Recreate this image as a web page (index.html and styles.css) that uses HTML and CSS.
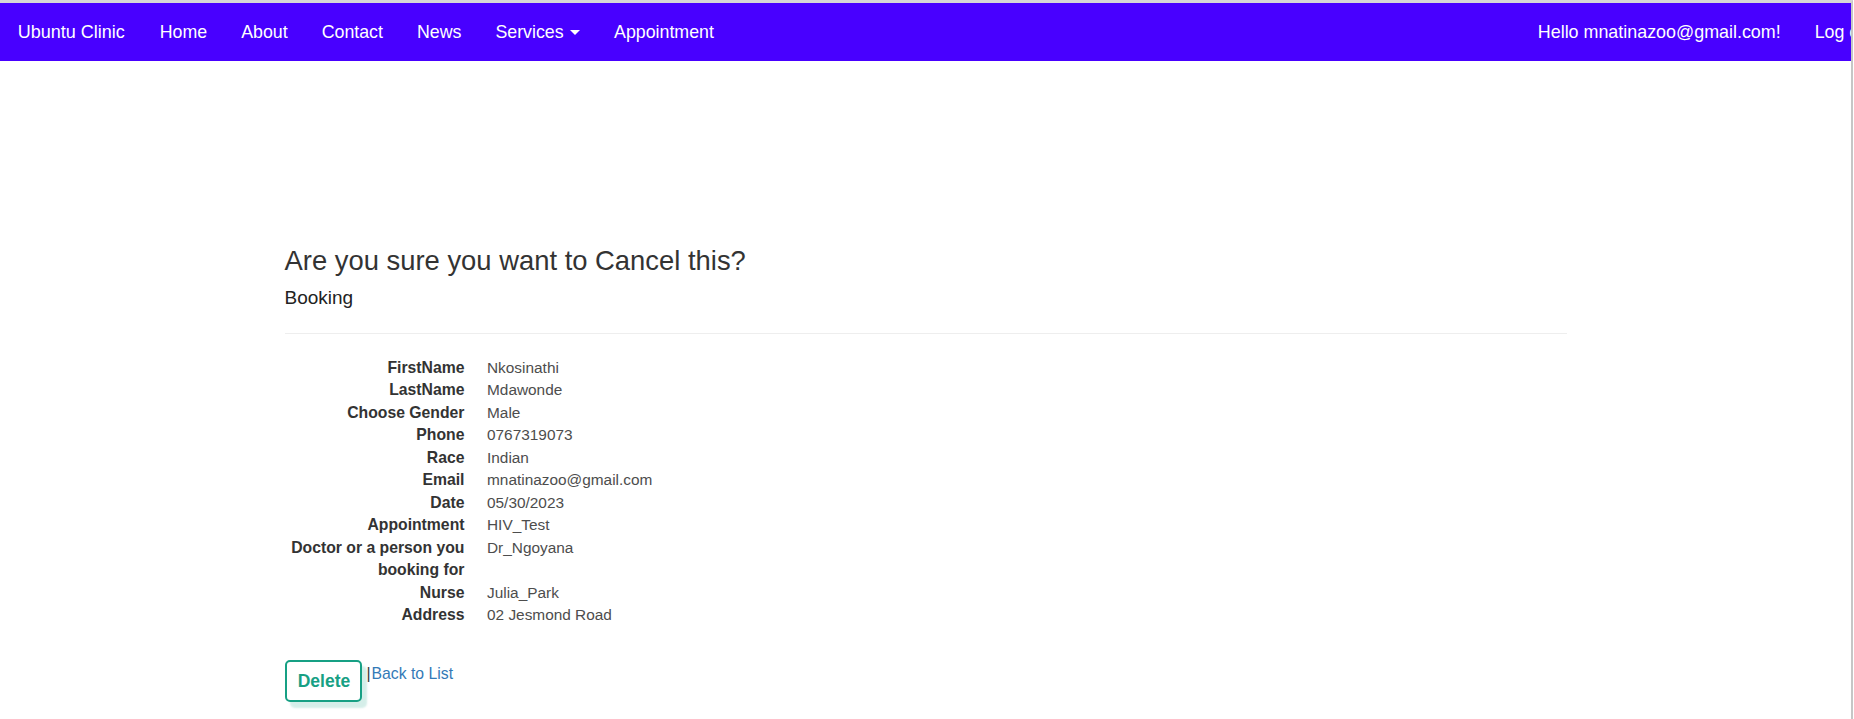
FILE: index.html
```html
<!DOCTYPE html>
<html lang="en">
<head>
<meta charset="utf-8">
<title>Delete - Ubuntu Clinic</title>
<link rel="stylesheet" href="styles.css">
</head>
<body>
<div class="frame">
  <nav class="navbar">
    <div class="navbar-inner">
      <a class="brand" href="#">Ubuntu Clinic</a>
      <ul class="nav">
        <li><a href="#">Home</a></li>
        <li><a href="#">About</a></li>
        <li><a href="#">Contact</a></li>
        <li><a href="#">News</a></li>
        <li><a href="#">Services <span class="caret"></span></a></li>
        <li><a href="#">Appointment</a></li>
      </ul>
      <ul class="nav nav-right">
        <li><a class="hello" href="#">Hello mnatinazoo@gmail.com!</a></li>
        <li><a href="#">Log out</a></li>
      </ul>
    </div>
  </nav>

  <main class="container">
    <h3 class="title">Are you sure you want to Cancel this?</h3>
    <div>
      <h4 class="subtitle">Booking</h4>
      <hr class="rule">
      <dl class="details">
        <dt>FirstName</dt><dd>Nkosinathi</dd>
        <dt>LastName</dt><dd>Mdawonde</dd>
        <dt>Choose Gender</dt><dd>Male</dd>
        <dt>Phone</dt><dd>0767319073</dd>
        <dt>Race</dt><dd>Indian</dd>
        <dt>Email</dt><dd>mnatinazoo@gmail.com</dd>
        <dt>Date</dt><dd>05/30/2023</dd>
        <dt>Appointment</dt><dd>HIV_Test</dd>
        <dt>Doctor or a person you booking for</dt><dd>Dr_Ngoyana</dd>
        <dt>Nurse</dt><dd>Julia_Park</dd>
        <dt>Address</dt><dd>02 Jesmond Road</dd>
      </dl>
      <form class="actions">
        <button type="button" class="btn-delete">Delete</button>
        <span class="back">|<a href="#">Back to List</a></span>
      </form>
    </div>
  </main>
</div>
</body>
</html>
```

FILE: styles.css
```css
* { box-sizing: border-box; }

html, body {
  margin: 0;
  padding: 0;
  background: #ffffff;
}

body {
  font-family: "Liberation Sans", Arial, sans-serif;
  color: #333333;
  overflow: hidden;
}

.frame {
  width: 1853px;
  height: 719px;
  border-top: 3px solid #d6d6d6;
  border-right: 2px solid #c6c6c6;
  overflow: hidden;
  background: #ffffff;
}

/* Navbar */
.navbar {
  height: 58px;
  background: #4800ff;
  overflow: hidden;
}

.navbar-inner {
  display: flex;
  align-items: center;
  height: 58px;
  min-width: 1891px;
}

.brand {
  padding: 0 18px 0 17.7px;
  font-size: 18px;
  color: #ffffff;
  text-decoration: none;
  white-space: nowrap;
}

.nav {
  display: flex;
  list-style: none;
  margin: 0;
  padding: 0;
}

.nav li a {
  display: block;
  padding: 0 17px;
  font-size: 17.8px;
  color: #ffffff;
  text-decoration: none;
  white-space: nowrap;
}

.nav li a.hello {
  font-size: 17.9px;
}

.nav-right {
  margin-left: auto;
}

.caret {
  display: inline-block;
  width: 0;
  height: 0;
  margin-left: 1.5px;
  vertical-align: middle;
  border-top: 5px solid #ffffff;
  border-left: 5px solid transparent;
  border-right: 5px solid transparent;
}

/* Content */
.container {
  width: 1282px;
  margin: 0 auto;
  padding-top: 185px;
}

.title {
  margin: 0 0 11px;
  font-size: 27.4px;
  font-weight: 400;
  line-height: 30px;
  color: #333333;
}

.subtitle {
  margin: 0;
  font-size: 19px;
  font-weight: 400;
  line-height: 22px;
  color: #222222;
}

.rule {
  margin: 24px 0 22.5px;
  border: 0;
  border-top: 1px solid #eeeeee;
  height: 0;
}

.details {
  display: grid;
  grid-template-columns: 180px 1fr;
  column-gap: 22.5px;
  margin: 0 0 33.5px;
  line-height: 22.5px;
}

.details dt {
  text-align: right;
  font-weight: 700;
  font-size: 15.75px;
  color: #333333;
}

.details dd {
  margin: 0;
  font-size: 15.4px;
  color: #4d4d4d;
}

.actions {
  display: flex;
  align-items: flex-start;
  margin: 0;
}

.btn-delete {
  width: 77px;
  height: 42px;
  padding: 0 0 0 2px;
  border: 2px solid #17a084;
  border-radius: 5px;
  background: #ffffff;
  color: #17a084;
  font-family: "Liberation Sans", Arial, sans-serif;
  font-size: 17.5px;
  font-weight: 700;
  box-shadow: 5px 6px 2px rgba(23, 160, 132, 0.18);
  cursor: pointer;
}

.back {
  margin: 3px 0 0 5px;
  font-size: 15.75px;
  line-height: 22.5px;
  color: #333333;
}

.back a {
  margin-left: 1px;
  color: #337ab7;
  text-decoration: none;
}
```
